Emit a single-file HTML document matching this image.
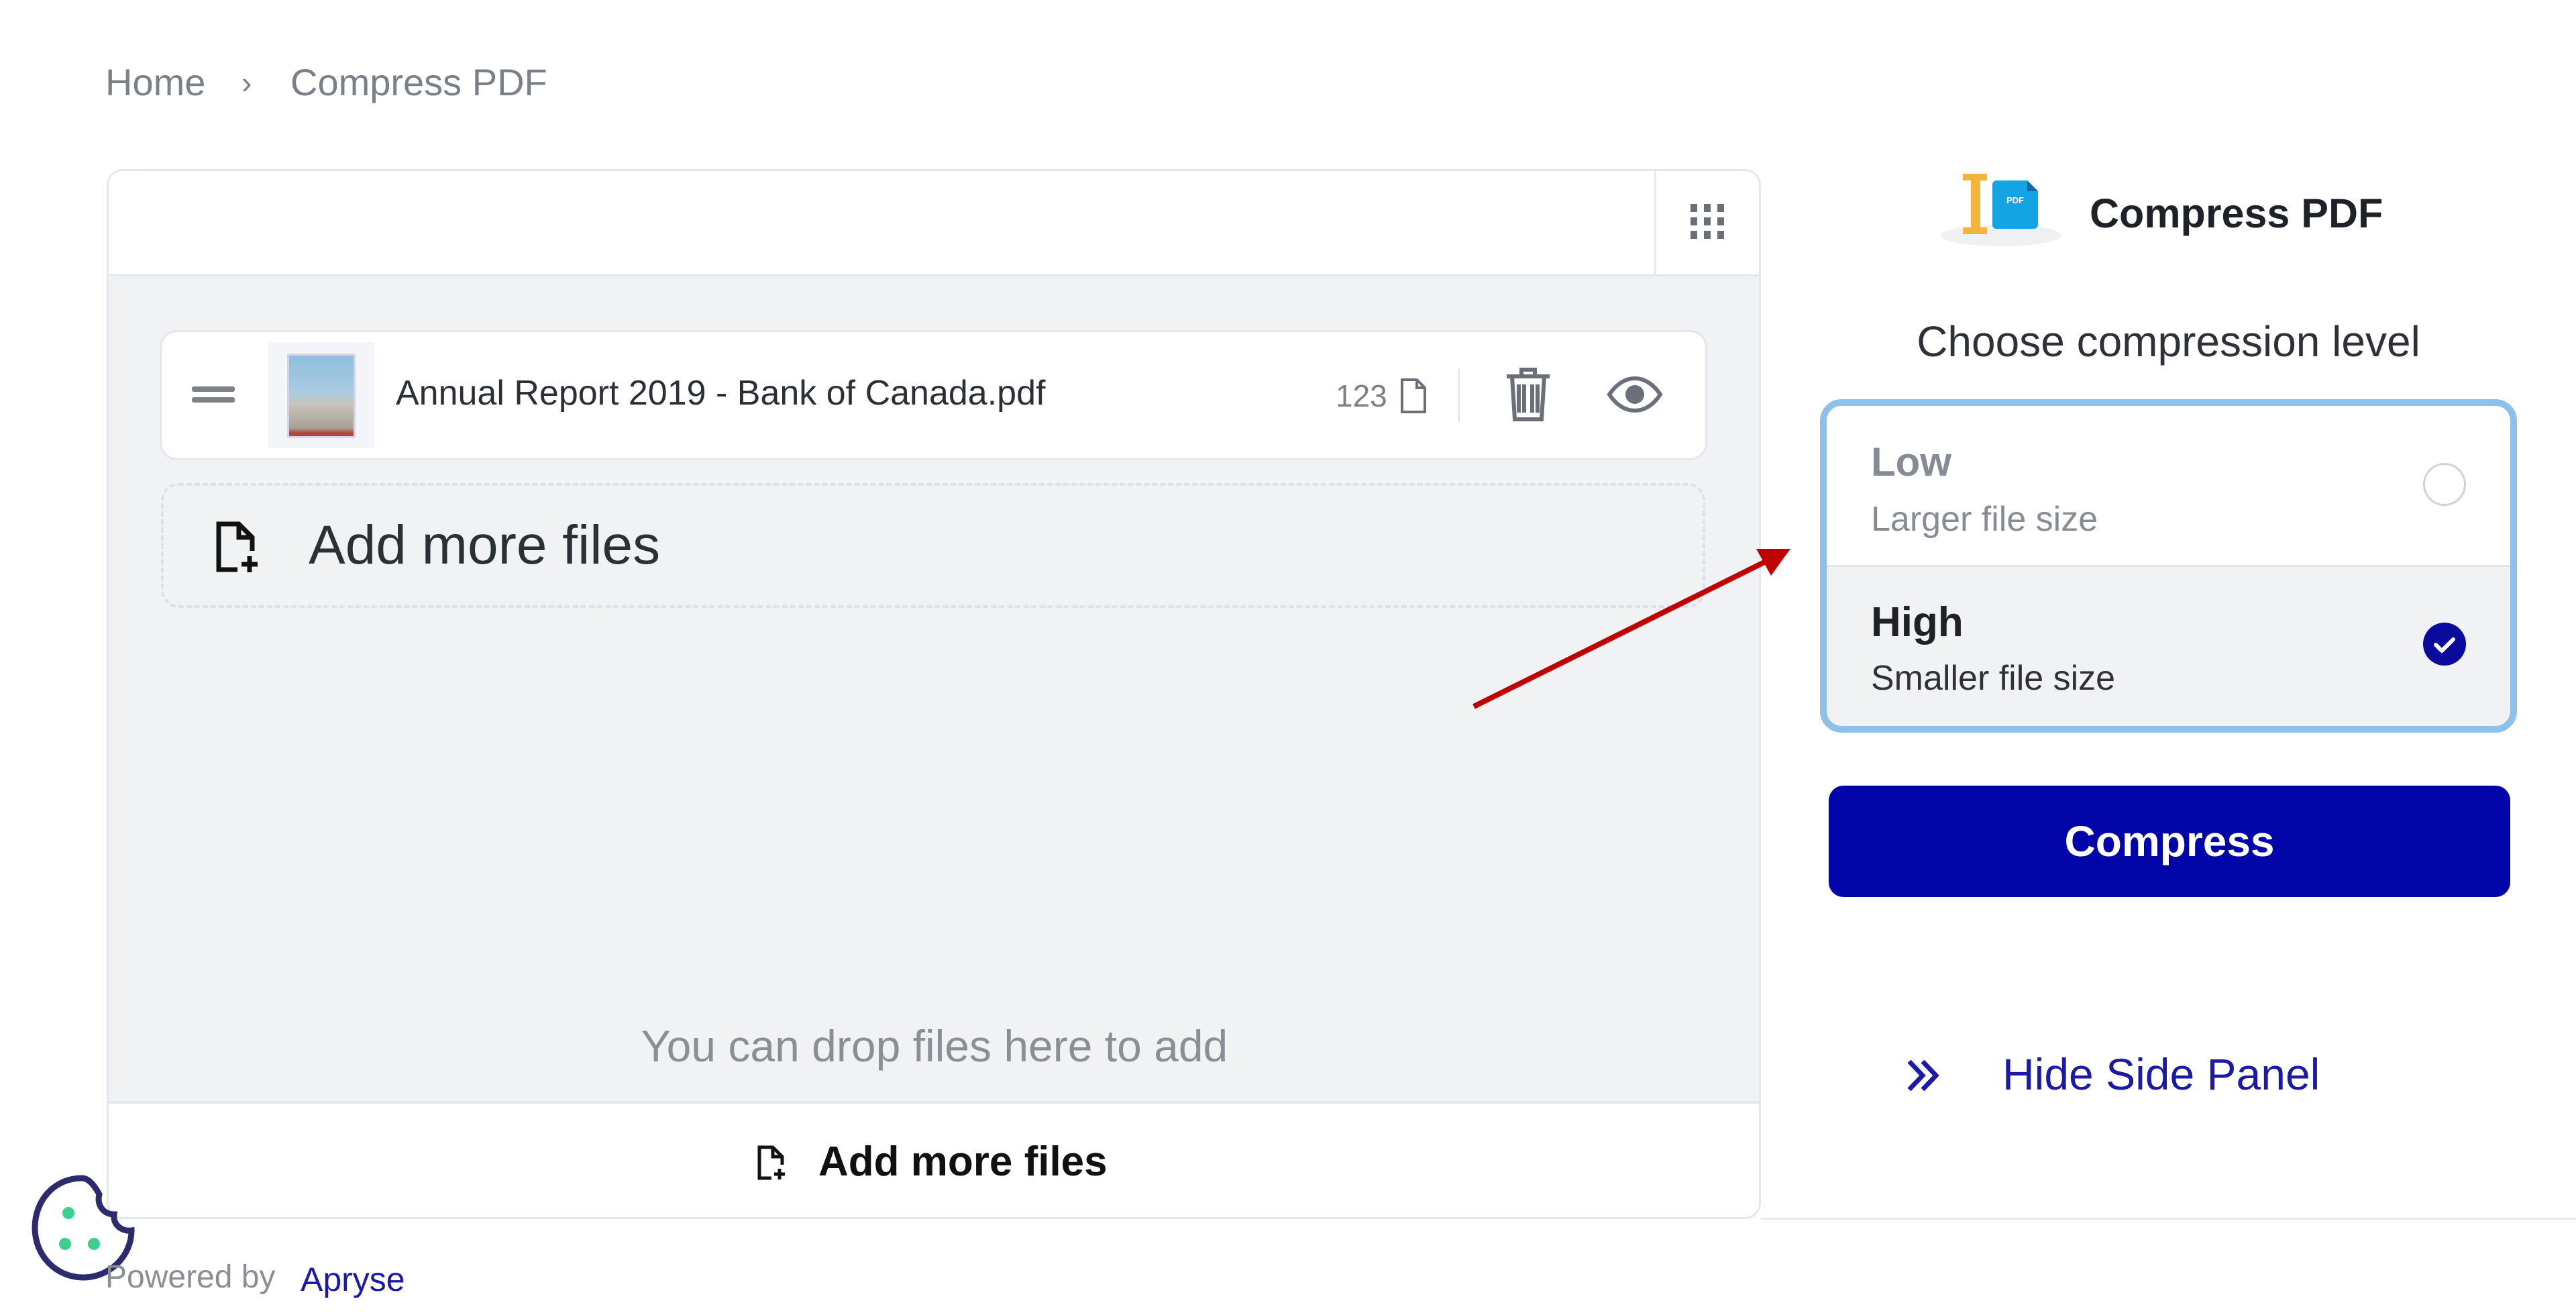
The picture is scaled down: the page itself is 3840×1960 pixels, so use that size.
<!DOCTYPE html>
<html><head><meta charset="utf-8"><style>
*{margin:0;padding:0;box-sizing:border-box}
body{width:3840px;height:1960px;background:#fff;font-family:"Liberation Sans",sans-serif;position:relative;overflow:hidden}
.a{position:absolute;white-space:nowrap}
</style></head><body>
<div class="a" style="left:157px;top:90px;font-size:56px;color:#7a8088">Home</div>
<div class="a" style="left:360px;top:96px;font-size:46px;color:#7a8088">›</div>
<div class="a" style="left:433px;top:90px;font-size:56px;color:#7a8088">Compress PDF</div>

<div class="a" style="left:159px;top:252px;width:2466px;height:1565px;border:3px solid #e2e8f0;border-radius:24px;background:#f1f2f4;overflow:hidden">
  <div class="a" style="left:0;top:0;width:100%;height:157px;background:#fff;border-bottom:3px solid #e2e8f0"></div>
  <div class="a" style="left:2304px;top:0;width:3px;height:157px;background:#e6e9ee"></div>
  <div class="a" style="left:0;top:1386px;width:100%;height:180px;background:#fff;border-top:4px solid #e2e8f0"></div>
</div>
<svg class="a" style="left:2516px;top:300px" width="60" height="60" viewBox="0 0 60 60" fill="#6b7078">
<rect x="4" y="4" width="10" height="12"/><rect x="24" y="4" width="10" height="12"/><rect x="44" y="4" width="10" height="12"/>
<rect x="4" y="24" width="10" height="12"/><rect x="24" y="24" width="10" height="12"/><rect x="44" y="24" width="10" height="12"/>
<rect x="4" y="44" width="10" height="12"/><rect x="24" y="44" width="10" height="12"/><rect x="44" y="44" width="10" height="12"/>
</svg>

<div class="a" style="left:238px;top:492px;width:2307px;height:194px;background:#fff;border:3px solid #e3e6ea;border-radius:26px"></div>
<div class="a" style="left:286px;top:576px;width:64px;height:8px;background:#7c8087;border-radius:3px"></div>
<div class="a" style="left:286px;top:592px;width:64px;height:8px;background:#7c8087;border-radius:3px"></div>
<div class="a" style="left:399px;top:510px;width:159px;height:158px;background:#f4f5f8"></div>
<div class="a" style="left:428px;top:527px;width:102px;height:126px;border:3px solid #d5d5ea;background:linear-gradient(#8fbde0 0%,#a9cbe2 45%,#c9c4bc 60%,#a89f95 90%,#b2483a 96%)"></div>
<div class="a" style="left:590px;top:556px;font-size:52px;color:#2b2f36">Annual Report 2019 - Bank of Canada.pdf</div>
<div class="a" style="left:1991px;top:563px;font-size:46px;color:#7c8087">123</div>
<svg class="a" style="left:2086px;top:562px" width="42" height="56" viewBox="0 0 42 56" fill="none" stroke="#6b7078" stroke-width="4"><path d="M4 4h22l12 12v36H4z"/><path d="M26 4v12h12"/></svg>
<div class="a" style="left:2173px;top:550px;width:3px;height:80px;background:#e3e6ea"></div>
<svg class="a" style="left:2242px;top:545px" width="72" height="84" viewBox="0 0 72 84" fill="none" stroke="#6b7078" stroke-width="6"><path d="M4 16h64M26 16V6h20v10M12 16l4 64h40l4-64M30 28v42M42 28v42M22 28v42M50 28v42"/></svg>
<svg class="a" style="left:2395px;top:560px" width="84" height="56" viewBox="0 0 84 56"><path d="M4 28C16 10 30 4 42 4s26 6 38 24C68 46 54 52 42 52S16 46 4 28z" fill="none" stroke="#6b7078" stroke-width="6"/><circle cx="42" cy="28" r="14" fill="#6b7078"/></svg>

<div class="a" style="left:240px;top:720px;width:2302px;height:186px;border:4px dashed #dde2e8;border-radius:26px"></div>
<svg class="a" style="left:320px;top:775px" width="72" height="82" viewBox="0 0 72 82" fill="none" stroke="#111" stroke-width="7"><path d="M34 74H6V6h30l20 20v20"/><path d="M36 6v20h20"/><path d="M52 54v24M40 66h24"/></svg>
<div class="a" style="left:460px;top:766px;font-size:82px;color:#2b2f36">Add more files</div>

<div class="a" style="left:0;top:1521px;width:2786px;text-align:center;font-size:66px;color:#8a8e95">You can drop files here to add</div>

<svg class="a" style="left:1128px;top:1706px" width="46" height="54" viewBox="0 0 46 54" fill="none" stroke="#111" stroke-width="5"><path d="M22 50H4V4h20l14 14v12"/><path d="M24 4v14h14"/><path d="M34 36v16M26 44h16"/></svg>
<div class="a" style="left:1220px;top:1696px;font-size:62px;font-weight:bold;color:#111">Add more files</div>

<div class="a" style="left:2625px;top:1815px;width:1215px;height:3px;background:#e6e9ee"></div>

<svg class="a" style="left:2180px;top:800px" width="510" height="270" viewBox="2180 800 510 270"><line x1="2197" y1="1053" x2="2640" y2="833" stroke="#c00000" stroke-width="8"/><polygon points="2669,818 2618,818 2640,858" fill="#c00000"/></svg>

<div class="a" style="left:2893px;top:335px;width:180px;height:32px;background:#eef0f4;border-radius:50%"></div>
<svg class="a" style="left:2920px;top:255px" width="130" height="100" viewBox="0 0 130 100"><rect x="18" y="6" width="14" height="86" fill="#f4b53b"/><rect x="6" y="4" width="36" height="10" fill="#f4b53b"/><rect x="6" y="84" width="36" height="10" fill="#f4b53b"/><path d="M56 14h46l16 16v50a6 6 0 0 1-6 6H56a6 6 0 0 1-6-6V20a6 6 0 0 1 6-6z" fill="#14a3e3"/><path d="M102 14v16h16z" fill="#0b6aa8"/><text x="84" y="48" font-size="13" font-weight="bold" fill="#fff" text-anchor="middle" font-family="Liberation Sans">PDF</text></svg>
<div class="a" style="left:3115px;top:283px;font-size:61px;font-weight:bold;color:#1e2228">Compress PDF</div>
<div class="a" style="left:2713px;top:472px;width:1039px;text-align:center;font-size:64px;color:#2e3238">Choose compression level</div>

<div class="a" style="left:2713px;top:595px;width:1039px;height:497px;border:10px solid #8fc0ea;border-radius:32px;background:#f1f2f4;overflow:hidden">
  <div class="a" style="left:0;top:0;width:100%;height:240px;background:#fff;border-bottom:3px solid #e3e6ea"></div>
</div>
<div class="a" style="left:2789px;top:654px;font-size:60px;font-weight:bold;color:#878c94">Low</div>
<div class="a" style="left:2789px;top:744px;font-size:52px;color:#878c94">Larger file size</div>
<div class="a" style="left:3612px;top:690px;width:64px;height:64px;border:3px solid #cfd3d8;border-radius:50%;background:#fff"></div>
<div class="a" style="left:2789px;top:892px;font-size:62px;font-weight:bold;color:#1e2228">High</div>
<div class="a" style="left:2789px;top:981px;font-size:52px;color:#2e3238">Smaller file size</div>
<svg class="a" style="left:3612px;top:928px" width="64" height="64" viewBox="0 0 64 64"><circle cx="32" cy="32" r="32" fill="#0a0a9c"/><path d="M19 33l9 9 17-17" fill="none" stroke="#fff" stroke-width="6" stroke-linecap="round" stroke-linejoin="round"/></svg>

<div class="a" style="left:2726px;top:1171px;width:1016px;height:166px;background:#0206a8;border-radius:22px;color:#fff;font-size:64px;font-weight:bold;text-align:center;line-height:166px">Compress</div>

<svg class="a" style="left:2840px;top:1578px" width="54" height="50" viewBox="0 0 54 50" fill="none" stroke="#1a1aa6" stroke-width="7"><path d="M6 4l20 21L6 46M26 4l20 21-20 21"/></svg>
<div class="a" style="left:2985px;top:1563px;font-size:66px;color:#1a1aa6">Hide Side Panel</div>

<svg class="a" style="left:42px;top:1748px" width="165" height="165" viewBox="0 0 165 165"><path d="M80 8C40 8 10 40 10 82s32 74 72 74 72-32 72-70c-16 2-28-10-26-24-16 0-26-14-22-30-10-18-18-24-26-24z" fill="#fff" stroke="#2d2a6e" stroke-width="9"/><circle cx="60" cy="60" r="9" fill="#3ecf8e"/><circle cx="55" cy="106" r="9" fill="#3ecf8e"/><circle cx="98" cy="106" r="9" fill="#3ecf8e"/></svg>
<div class="a" style="left:157px;top:1876px;font-size:48px;color:#8a8e95">Powered by</div>
<div class="a" style="left:448px;top:1878px;font-size:50px;color:#1a1aa6">Apryse</div>
</body></html>
